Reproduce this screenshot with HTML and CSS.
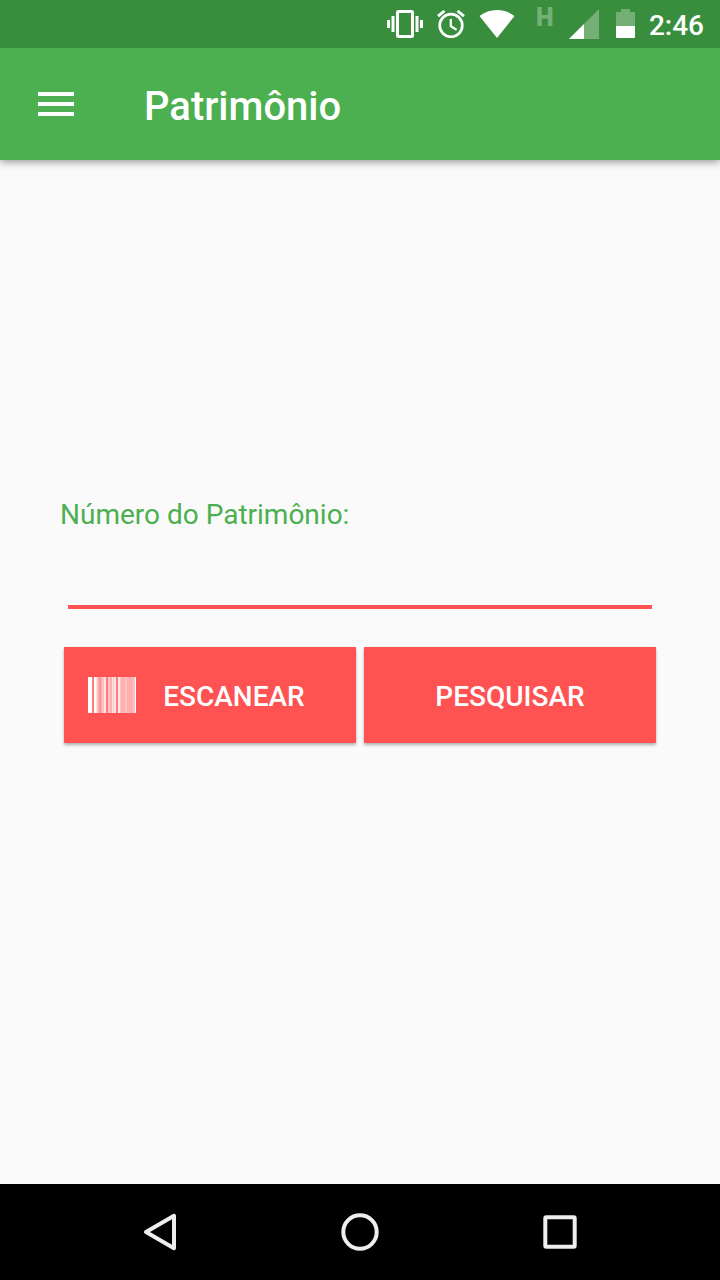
FILE: index.html
```html
<!DOCTYPE html>
<html lang="pt-BR">
<head>
<meta charset="utf-8">
<meta name="viewport" content="width=device-width, initial-scale=1">
<title>Patrimônio</title>
<link rel="stylesheet" href="styles.css">
</head>
<body class="screen">
<div class="status-bar">
  <svg width="36" height="28" viewBox="0 0 36 28" fill="#fff" aria-hidden="true">
    <path d="M0 10h3v8H0zM4.500 6h3v16h-3zM28.500 6h3v16h-3zM33 10h3v8h-3z"/>
    <path fill-rule="evenodd" d="M11.500 0h13a2.500 2.500 0 0 1 2.500 2.500v23a2.500 2.500 0 0 1-2.500 2.500h-13A2.500 2.500 0 0 1 9 25.500v-23A2.500 2.500 0 0 1 11.500 0zM12 3v22h12V3z"/>
  </svg>
  <svg width="28" height="28" viewBox="0 0 28 28" fill="none" stroke="#fff" aria-hidden="true">
    <circle cx="14" cy="15.500" r="11.300" stroke-width="2.700"/>
    <path stroke-width="2.200" d="M13.800 9v7.200l5.800 3.500"/>
    <path stroke-width="2.800" d="M1 6.200L7.500.900M27 6.200L20.500.900"/>
  </svg>
  <svg width="36" height="28" viewBox="0 0 36 28" fill="#fff" aria-hidden="true">
    <path d="M.500 6C5.500 2 11.500 0 18 0s12.500 2 17.500 6L18 28z"/>
  </svg>
  <span class="network-type">H</span>
  <svg width="32" height="30" viewBox="0 0 32 30" fill="#fff" aria-hidden="true">
    <path fill-opacity=".3" d="M0 30L30 0v30z"/>
    <path d="M0 30l15-15v15z"/>
  </svg>
  <svg width="20" height="30" viewBox="0 0 20 30" fill="#fff" aria-hidden="true">
    <path fill-opacity=".3" d="M1 17V4q0-1 1-1h4V0h9v3h4q1 0 1 1v13z"/>
    <path d="M1 17h19v11q0 1-1 1H2q-1 0-1-1z"/>
  </svg>
  <time class="clock">2:46</time>
</div>
<header class="app-bar">
  <button class="menu-button" type="button" aria-label="Menu">
    <svg width="36" height="24" viewBox="0 0 36 24" fill="#fff" aria-hidden="true">
      <path d="M0 0h36v4H0zM0 10h36v4H0zM0 20h36v4H0z"/>
    </svg>
  </button>
  <h1 class="title">Patrimônio</h1>
</header>
<main class="content">
  <form class="search-form">
    <label class="field-label" for="numero">Número do Patrimônio:</label>
    <input class="field-input" id="numero" type="text">
    <div class="actions">
      <button class="action action-scan" type="button">
        <svg class="barcode" width="48" height="36" viewBox="0 0 48 37" preserveAspectRatio="none" fill="#fff" aria-hidden="true">
          <path d="M0 0h4v37H0zM6 0h2v37H6zM47 0h1v37h-1z"/>
          <path fill-opacity=".85" d="M8 0h1v37H8zM16 0h2v37h-2zM24 0h1v37h-1zM26 0h2v37h-2zM30 0h2v37h-2z"/>
          <path fill-opacity=".65" d="M9 0h1v37H9zM14 0h2v37h-2zM20 0h2v37h-2zM25 0h1v37h-1zM32 0h1v37h-1zM37 0h2v37h-2zM45 0h2v37h-2z"/>
          <path fill-opacity=".55" d="M10 0h1v37h-1zM13 0h1v37h-1zM22 0h2v37h-2zM33 0h4v37h-4zM39 0h6v37h-6z"/>
          <path fill-opacity=".4" d="M11 0h2v37h-2z"/>
          <path fill-opacity=".25" d="M4 0h2v37H4zM18 0h2v37h-2zM28 0h2v37h-2z"/>
        </svg>
        <span class="scan-text">ESCANEAR</span>
      </button>
      <button class="action" type="submit">PESQUISAR</button>
    </div>
  </form>
</main>
<nav class="nav-bar">
  <button class="nav-button" type="button" aria-label="Voltar">
    <svg width="40" height="40" viewBox="0 0 40 40" fill="none" stroke="#eee" stroke-width="4" stroke-linejoin="round" aria-hidden="true">
      <path d="M34 3.800v32.400L6 20z"/>
    </svg>
  </button>
  <button class="nav-button" type="button" aria-label="Início">
    <svg width="40" height="40" viewBox="0 0 40 40" fill="none" stroke="#eee" stroke-width="4" aria-hidden="true">
      <circle cx="20" cy="20" r="16.700"/>
    </svg>
  </button>
  <button class="nav-button" type="button" aria-label="Recentes">
    <svg width="40" height="40" viewBox="0 0 40 40" fill="none" stroke="#eee" stroke-width="4" stroke-linejoin="round" aria-hidden="true">
      <rect x="5.300" y="5.300" width="29.400" height="29.400" rx="1"/>
    </svg>
  </button>
</nav>
</body>
</html>
```

FILE: styles.css
```css
* {
  box-sizing: border-box;
}

.screen {
  display: flex;
  flex-direction: column;
  min-height: 100vh;
  margin: 0;
  background: #fafafa;
  font-family: Roboto, sans-serif;
}

button {
  border: 0;
  padding: 0;
  background: none;
  font-family: inherit;
}

svg {
  display: block;
  flex: none;
}

.status-bar {
  position: relative;
  z-index: 1;
  display: flex;
  align-items: center;
  justify-content: flex-end;
  gap: 14px;
  height: 48px;
  padding-right: 16px;
  background: #388e3c;
  color: #fff;
}

.network-type {
  width: 26px;
  padding: 0 0 12px 7px;
  font-size: 25px;
  font-weight: 900;
  line-height: 24px;
  opacity: .3;
}

.clock {
  padding-top: 4px;
  font-size: 28px;
  font-weight: 500;
  line-height: 32px;
}

.app-bar {
  display: flex;
  align-items: center;
  height: 112px;
  padding: 0 32px;
  background: #4caf50;
  box-shadow: 0 2px 8px rgba(0, 0, 0, .4);
}

.menu-button {
  width: 48px;
  height: 48px;
  padding-left: 6px;
}

.title {
  margin: 0;
  padding: 6px 0 0 64px;
  color: #fff;
  font-size: 40px;
  font-weight: 500;
  line-height: 48px;
}

.content {
  display: flex;
  flex: 1;
  flex-direction: column;
  justify-content: center;
  padding: 0 60px 104px;
}

.field-label {
  display: block;
  color: #4caf50;
  font-size: 28px;
  line-height: 33px;
}

.field-input {
  display: block;
  width: calc(100% - 16px);
  height: 64px;
  margin: 14px 8px 38px;
  border: 0;
  border-bottom: 4px solid #ff5252;
  border-radius: 0;
  padding: 0;
  outline: 0;
  background: none;
  font-family: inherit;
  font-size: 36px;
}

.actions {
  display: grid;
  grid-template-columns: 1fr 1fr;
  gap: 8px;
  padding: 0 4px;
}

.action {
  height: 96px;
  padding-top: 4px;
  background: #ff5252;
  box-shadow: 0 2px 3px rgba(0, 0, 0, .3);
  color: #fff;
  font-size: 28px;
  font-weight: 500;
  line-height: 32px;
}

.action-scan {
  display: flex;
  align-items: center;
  padding: 0 24px;
}

.scan-text {
  flex: 1;
  padding-top: 4px;
  text-align: center;
}

.nav-bar {
  display: flex;
  align-items: center;
  justify-content: center;
  gap: 24px;
  height: 96px;
  padding: 0 72px;
  background: #000;
}

.nav-button {
  display: flex;
  flex: 0 1 176px;
  justify-content: center;
}
```
